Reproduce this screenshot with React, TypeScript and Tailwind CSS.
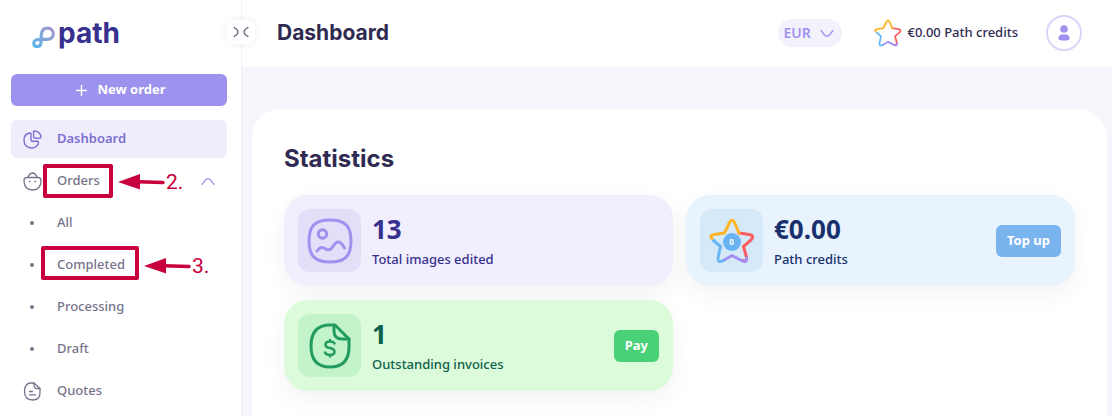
import React from "react";

const navLinks = ["All", "Completed", "Processing", "Draft"];

const LogoMark: React.FC = () => (
  <svg width="24" height="23" viewBox="0 0 24 23" fill="none">
    <defs>
      <linearGradient id="logo" x1="2" y1="21" x2="22" y2="2" gradientUnits="userSpaceOnUse">
        <stop stopColor="#5db4e6" />
        <stop offset="1" stopColor="#a596cd" />
      </linearGradient>
    </defs>
    <path
      d="M9.300 9C9.500 5 11.500 2.200 15.800 2.200C19 2.200 21.300 4.500 21.300 7.800C21.300 11 19 13.300 15 13.300H8C4 13.300 1.800 14.500 1.800 17.300C1.800 19.300 3.200 20.600 5 20.600C8 20.600 9.100 18 9.100 15.500C9.100 13 9 11.500 9.300 9Z"
      stroke="url(#logo)"
      strokeWidth="3.200"
    />
  </svg>
);

const Star: React.FC<{ className: string; stroke: number }> = ({ className, stroke }) => (
  <svg className={className} viewBox="0 0 46 46" fill="none" strokeWidth={stroke} strokeLinejoin="round" strokeLinecap="round">
    <path d="M30 15L40 16.500Q46 17.500 42 22L34.500 28.500L37.500 39Q38 44 34 42.500" stroke="#fb5c62" />
    <path d="M37.500 40Q38 45 33.500 43L23 37.500L13.500 43" stroke="#a18ff3" />
    <path d="M14 42.500Q8.500 45.500 9 40L11.500 28.500L4 22" stroke="#69b8f5" />
    <path d="M3 20.500Q0 17 5.500 16.500L15.500 15L20.500 4.500Q23 0 25.500 4.500L30 15" stroke="#ffb427" />
  </svg>
);

const Callout: React.FC<{ label: string; frame: string; arrow: string }> = ({ label, frame, arrow }) => (
  <>
    <span className={`absolute rounded-xs border-4 border-[#c8003d] ${frame}`} />
    <span className={`absolute flex items-center text-[#c8003d] ${arrow}`}>
      <svg width="48" height="16" viewBox="0 0 48 16">
        <path d="M0 8L22 0V15.500Z" fill="#c8003d" />
        <path d="M20 7.800L45 8.500" stroke="#c8003d" strokeWidth="3.500" strokeLinecap="round" />
      </svg>
      <span className="font-['Roboto',sans-serif] text-[21px] leading-6 font-normal">{label}</span>
    </span>
  </>
);

const StatCard: React.FC<{
  card: string;
  tile: string;
  icon: React.ReactNode;
  value: string;
  label: string;
  action?: React.ReactNode;
}> = ({ card, tile, icon, value, label, action }) => (
  <div className={`flex items-center rounded-3xl p-3.5 shadow-[0_8px_24px_rgba(0,0,0,0.05)] ${card}`}>
    <div className={`flex size-[63px] items-center justify-center rounded-xl ${tile}`}>{icon}</div>
    <div className="ml-[11px] flex-1">
      <p className="text-[26px] leading-8 font-bold">{value}</p>
      <p className="mt-1 text-[13px] leading-5 font-medium">{label}</p>
    </div>
    {action}
  </div>
);

const App: React.FC = () => {
  return (
    <div className="flex min-h-screen bg-[#f7f5fb] font-['Noto_Sans',sans-serif]">
      <aside className="relative w-[242px] shrink-0 border-r border-[#f0eff4] bg-white pr-3.5 pl-[11px]">
        <a href="#" className="flex h-[74px] items-center pl-[21px] text-[#38308f]">
          <LogoMark />
          <span className="ml-0.5 pb-2 font-['Inter',sans-serif] text-[28px] leading-7 font-bold">path</span>
        </a>
        <button
          aria-label="Collapse menu"
          className="absolute top-5 -right-3.5 flex h-6 w-7 items-center justify-center rounded-lg bg-white text-[#55506f] shadow-[0_0_8px_rgba(0,0,0,0.08)]"
        >
          <svg width="16" height="12" viewBox="0 0 16 12" fill="none" stroke="currentColor" strokeWidth="1.200" strokeLinecap="round">
            <path d="M1 1.500Q9 6 1 10.500M15 1.500Q7 6 15 10.500" />
          </svg>
        </button>
        <button className="flex h-8 w-full items-center justify-center gap-2.5 rounded-md bg-[#9d93ee] pl-1 text-[13px] font-bold text-white">
          <svg width="11" height="11" viewBox="0 0 11 11" stroke="currentColor" strokeWidth="1.400">
            <path d="M5.500 0V11M0 5.500H11" />
          </svg>
          New order
        </button>
        <nav className="mt-3.5 flex flex-col gap-1 text-[13px] font-medium text-[#77738b]">
          <a href="#" className="flex h-[38px] items-center gap-[15px] rounded-md bg-[#efedfc] pl-3 font-semibold text-[#7b6fd0]">
            <svg width="19" height="19" viewBox="0 0 19 19" fill="none" stroke="currentColor" strokeWidth="1.400" strokeLinejoin="round">
              <path d="M7 3C3 3.500 1 6.500 1 10C1 15 4 18 8.500 18C12.500 18 15.500 15.500 15.500 12Q15.500 11.300 14.500 11.300H9.500Q8 11.300 8 9.800V4Q8 3 7 3Z" />
              <path d="M10.500 2C10.500 1 11 .800 12 1C15.500 1.500 17.500 4 18 6.500Q18 7.700 17 8L12.500 8.200Q10.800 8.300 10.700 7Z" />
            </svg>
            Dashboard
          </a>
          <a href="#" className="relative flex h-[38px] items-center gap-[15px] pr-3 pl-3">
            <svg width="19" height="19" viewBox="0 0 19 19" fill="none" stroke="currentColor" strokeWidth="1.300" strokeLinecap="round">
              <path d="M4 5.500H15Q18 5.500 18 8.500C18 14.500 15 18 9.500 18S1 14.500 1 8.500Q1 5.500 4 5.500Z" />
              <path d="M5 5.300Q6.500 1 9.500 1T14 5.300" />
              <path d="M6.500 9.500h.700M11.800 9.500h.700" />
            </svg>
            <span className="flex-1">Orders</span>
            <svg width="14" height="9" viewBox="0 0 14 9" fill="none" stroke="#a69df0" strokeWidth="1.300" strokeLinecap="round">
              <path d="M1 7.500L4.500 3Q7 .500 9.500 3L13 7.500" />
            </svg>
            <Callout label="2." frame="top-0.5 left-8 h-[34px] w-[70px]" arrow="top-2 left-[107px]" />
          </a>
          {navLinks.map((link) => (
            <a key={link} href="#" className="relative flex h-[38px] items-center pl-[19px]">
              <span className="mr-[23px] size-1 rounded-full bg-[#77738b]" />
              {link}
              {link === "Completed" && (
                <Callout label="3." frame="top-0 left-[30px] h-[34px] w-[98px]" arrow="top-2 left-[133px]" />
              )}
            </a>
          ))}
          <a href="#" className="flex h-[38px] items-center gap-[15px] pl-3">
            <svg width="19" height="19" viewBox="0 0 19 19" fill="none" stroke="currentColor" strokeWidth="1.300" strokeLinecap="round" strokeLinejoin="round">
              <path d="M11 1H8Q1.500 1 1.500 9.500T9.500 18T17 10V6.500Z" />
              <path d="M11 1V3Q11 6.500 14 6.500H17M6.500 9.500h3M6.500 12.800h6" />
            </svg>
            Quotes
          </a>
        </nav>
      </aside>

      <div className="flex min-w-0 flex-1 flex-col">
        <header className="flex h-[67px] items-center bg-white pr-[30px] pb-0.5 pl-[35px]">
          <h1 className="flex-1 font-['Inter',sans-serif] text-[21px] font-bold text-[#302a52]">Dashboard</h1>
          <div className="relative mr-8 text-[#9d93ee]">
            <select
              aria-label="Currency"
              className="h-7 w-16 appearance-none rounded-full bg-[#f3f1fc] pl-1.5 text-sm font-semibold"
            >
              <option>EUR</option>
            </select>
            <svg className="pointer-events-none absolute top-2.5 right-2" width="14" height="9" viewBox="0 0 14 9" fill="none" stroke="currentColor" strokeWidth="1.300" strokeLinecap="round">
              <path d="M1 1.500L4.500 6Q7 8.500 9.500 6L13 1.500" />
            </svg>
          </div>
          <Star className="mr-1.5 size-7" stroke={3} />
          <p className="mr-7 text-[13px] font-medium text-[#302a52]">€0.00 Path credits</p>
          <button aria-label="Account" className="flex size-9 items-center justify-center rounded-full border-2 border-[#dad4f8]">
            <svg width="12" height="16" viewBox="0 0 12 16" fill="#9d93ee">
              <circle cx="6" cy="4" r="3.800" />
              <path d="M3.500 9.500H8.500Q11.500 10.500 11.500 13Q11.500 15.500 8.500 15.500H3.500Q.500 15.500 .500 13Q.500 10.500 3.500 9.500Z" />
            </svg>
          </button>
        </header>

        <main className="mt-[42px] mr-[5px] ml-2.5 flex-1 rounded-t-[28px] bg-white px-8 pt-8 pb-6">
          <h2 className="font-['Inter',sans-serif] text-2xl leading-9 font-bold text-[#302a52]">Statistics</h2>
          <div className="mt-[18px] grid grid-cols-2 gap-x-[13px] gap-y-3.5">
            <StatCard
              card="bg-[#f1eefd] text-[#38308f]"
              tile="bg-[#e3dff8]"
              value="13"
              label="Total images edited"
              icon={
                <svg width="46" height="46" viewBox="0 0 46 46" fill="none" stroke="#9d93ee" strokeWidth="3" strokeLinecap="round">
                  <path d="M23 2C38 2 44 8 44 23S38 44 23 44S2 38 2 23S8 2 23 2Z" />
                  <circle cx="15.500" cy="16" r="4.200" />
                  <path d="M10 33C14 27 17 30 20 31.500C26 34 26 24 31 24C34 24 36 27 37.500 30" />
                </svg>
              }
            />
            <StatCard
              card="bg-[#e8f3fd] text-[#18316d]"
              tile="bg-[#d6e9f9]"
              value="€0.00"
              label="Path credits"
              icon={
                <div className="relative">
                  <Star className="size-[46px]" stroke={3} />
                  <span className="absolute top-[15px] left-3.5 flex size-[18px] items-center justify-center rounded-full bg-[#69b3f2] text-[8px] font-bold text-white">
                    0
                  </span>
                </div>
              }
              action={<button className="h-8 rounded-md bg-[#7ab4ee] px-[11px] text-[13px] font-bold text-white">Top up</button>}
            />
            <StatCard
              card="bg-[#dcfbda] text-[#0e614a]"
              tile="bg-[#c3f4c9]"
              value="1"
              label="Outstanding invoices"
              icon={
                <svg width="46" height="46" viewBox="0 0 46 46" fill="none" stroke="#219b5e" strokeWidth="3" strokeLinecap="round" strokeLinejoin="round">
                  <path d="M28 2H23Q4 2 4 23T23 44T42 24V16Z" />
                  <path d="M27 3V8Q27 16 35 16H42" />
                  <path d="M27.500 20.500Q26.500 18.500 23 18.500Q18.500 18.500 18.500 21.700Q18.500 24.500 23 25Q27.500 25.800 27.500 28.800Q27.500 32 23 32Q19 32 18 29.500M23 17V18.500M23 32V33.500" strokeWidth="2.500" />
                </svg>
              }
              action={<button className="h-8 rounded-md bg-[#48d176] px-[11px] text-[13px] font-bold text-white">Pay</button>}
            />
          </div>
        </main>
      </div>
    </div>
  );
};

export default App;
